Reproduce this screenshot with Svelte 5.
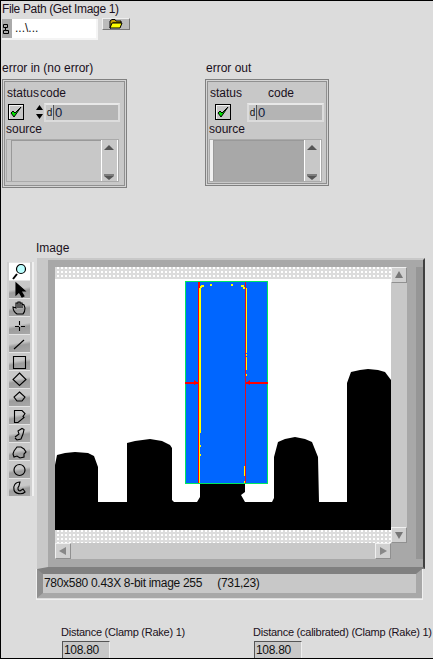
<script>
	const tools = [
		{ name: 'zoom', d: 'M6 11L2 16', circle: [10, 6, 4.5] },
		{ name: 'arrow', d: 'M5 2L5 14L8 11L11 16L13 15L10 10L14 10Z', fill: true },
		{ name: 'hand', d: 'M6 15C3 13 2 11 2 8L5 9L5 4L7 4L7 3L9 3L9 4L11 4L11 5L13 6L14 9C14 12 13 14 12 15ZM7 4V9M9 3V9M11 5V9' },
		{ name: 'cross', d: 'M8.500 4V8M8.500 10V14M4 9.500H8M10 9.500H14' },
		{ name: 'line', d: 'M3 14L13 5' },
		{ name: 'rect', d: 'M2.500 3.500H14.500V15.500H2.500Z' },
		{ name: 'diamond', d: 'M8.500 2L15 8.500L8.500 14.500L2 8.500Z' },
		{ name: 'rotated', d: 'M8.500 3L14 8L11 12H6L3 8Z' },
		{ name: 'poly', d: 'M3.500 3.500H11L14 6.500L12 9.500L13 10.500L7 15.500H3.500Z' },
		{ name: 'free', d: 'M4 12L8 9L7 6L11 3.500L13 4.500L12 9L10 14L6 15L4 13' },
		{ name: 'region', d: 'M3 8L6 4L10 4L13 6L15 9L13 11L13 14L9 15L6 13L3 14L2 11Z' },
		{ name: 'oval', circle: [8.5, 9, 5.5] },
		{ name: 'annulus', d: 'M9 3C4 3 2 7 3 11C4 15 11 16 14 13L12 10L9 12C7 12 6 9 8 7Z' }
	]
</script>

{#snippet arrowButton(dir)}
	<div class="scrollbtn">
		<svg width="14" height="14" viewBox="0 0 14 14">
			{#if dir === 'up'}<path d="M7 3L11 10H3Z" fill="#777" />{/if}
			{#if dir === 'down'}<path d="M7 11L11 4H3Z" fill="#777" />{/if}
			{#if dir === 'left'}<path d="M3 7L10 3V11Z" fill="#888" />{/if}
			{#if dir === 'right'}<path d="M11 7L4 3V11Z" fill="#888" />{/if}
		</svg>
	</div>
{/snippet}

{#snippet check()}
	<div class="check">
		<svg width="14" height="14" viewBox="0 0 14 14">
			<path d="M2 8L5 12L12 2L6 8L4 6Z" fill="#00e000" stroke="#000" stroke-width="1" />
		</svg>
	</div>
{/snippet}

{#snippet sourceBox(dark)}
	<div class="source" class:dark>
		<div class="source-text"></div>
		<div class="source-bar">
			<svg width="14" height="41" viewBox="0 0 14 41">
				<path d="M7 5L12 10H2Z" fill="#555" />
				<path d="M2 36H12L7 40Z" fill="#555" />
				<path d="M2 35H12" stroke="#333" />
			</svg>
		</div>
	</div>
{/snippet}

<div class="panel">
	<div class="label file-label">File Path (Get Image 1)</div>
	<div class="path">
		<div class="path-tag">
			<svg width="8" height="14" viewBox="0 0 8 14">
				<path d="M1.500 2.500H5.500V5.500H1.500ZM3.500 5.500V8.500H6.500V11.500H1.500V8.500H3.500" fill="none" stroke="#000" />
			</svg>
		</div>
		<div class="path-text">...\...</div>
	</div>
	<div class="browse">
		<svg width="14" height="10" viewBox="0 0 14 10">
			<path d="M1 2L3 0.500H6L7 2H12V4H4L2 9H1Z" fill="#c8a000" stroke="#000" />
			<path d="M3 4H13L11 9H1Z" fill="#ffff00" stroke="#000" />
		</svg>
	</div>

	<div class="label in-label">error in (no error)</div>
	<div class="cluster cluster-in">
		<div class="row-labels">
			<span class="label">status</span><span class="label code-in">code</span>
		</div>
		<div class="row-values">
			{@render check()}
			<div class="spin">
				<svg width="7" height="20" viewBox="0 0 7 20">
					<path d="M3.500 3L7 8H0Z" fill="#000" /><path d="M3.500 17L7 12H0Z" fill="#000" />
				</svg>
			</div>
			<div class="numeric">
				<span class="radix">d</span><span class="num">0</span>
			</div>
		</div>
		<div class="label source-label">source</div>
		{@render sourceBox(false)}
	</div>

	<div class="label out-label">error out</div>
	<div class="cluster cluster-out">
		<div class="row-labels">
			<span class="label">status</span><span class="label code-out">code</span>
		</div>
		<div class="row-values">
			{@render check()}
			<div class="numeric numeric-out">
				<span class="radix">d</span><span class="num">0</span>
			</div>
		</div>
		<div class="label source-label">source</div>
		{@render sourceBox(true)}
	</div>

	<div class="label image-label">Image</div>

	<div class="palette">
		{#each tools as tool, i}
			<div class="tool" class:active={i === 0}>
				<svg width="17" height="18" viewBox="0 0 17 18">
					{#if tool.circle}
						<circle cx={tool.circle[0]} cy={tool.circle[1]} r={tool.circle[2]} fill={i === 0 ? '#bff' : 'none'} stroke="#000" stroke-width="1.200" />
					{/if}
					{#if tool.d}
						<path d={tool.d} fill={tool.fill ? '#000' : 'none'} stroke="#000" stroke-width={i === 0 ? 2 : 1.1} />
					{/if}
				</svg>
			</div>
		{/each}
	</div>

	<div class="display">
		<div class="view">
			<div class="dots"></div>
			<div class="vbar">
				{@render arrowButton('up')}
				{@render arrowButton('down')}
			</div>
			<svg class="picture" width="336" height="251" viewBox="55 279 336 251">
				<rect x="55" y="279" width="336" height="251" fill="#fff" />
				<path fill="#000" d="M55 530V465L57 455L65 453L75 452L88 453L94 456L98 467V502H127V443L135 441L150 439L162 441L170 445L172 448V500L174 502H197L200 497V483H245V492L241 495L245 502H272L274 498V457L278 442L285 439L295 437L305 439L312 442L318 457L319 502H347V383L351 372L360 370L368 369L378 370L385 372L391 380V530Z" />
				<rect x="185.500" y="281.500" width="82" height="202" fill="#0066ff" stroke="#00e860" />
				<rect x="198" y="282" width="2" height="201" fill="#ff0000" />
				<rect x="245" y="282" width="1" height="201" fill="#e01020" />
				<rect x="185" y="382" width="13" height="2" fill="#ff0000" />
				<rect x="246" y="382" width="22" height="2" fill="#ff0000" />
				<path d="M194 380L198 383L194 385ZM250 380L246 383L250 385Z" fill="#ff0000" />
				<g fill="#ffff00">
					<rect x="199" y="288" width="2" height="145" />
					<rect x="199" y="433" width="1" height="50" />
					<rect x="200" y="445" width="1" height="2" />
					<rect x="200" y="454" width="1" height="2" />
					<rect x="200" y="286" width="2" height="2" />
					<rect x="201" y="285" width="3" height="2" />
					<rect x="210" y="284" width="2" height="2" />
					<rect x="231" y="284" width="2" height="2" />
					<rect x="241" y="285" width="3" height="2" />
					<rect x="243" y="287" width="2" height="2" />
					<rect x="246" y="288" width="1" height="65" />
					<rect x="246" y="354" width="1" height="2" />
					<rect x="246" y="357" width="1" height="13" />
					<rect x="246" y="374" width="1" height="2" />
					<rect x="244" y="466" width="1" height="10" />
					<rect x="244" y="481" width="1" height="2" />
				</g>
			</svg>
			<div class="dots"></div>
			<div class="hbar">
				{@render arrowButton('left')}
				{@render arrowButton('right')}
			</div>
			<div class="corner"></div>
		</div>
	</div>

	<div class="status">
		<div class="status-inner">780x580 0.43X 8-bit image 255 &nbsp;&nbsp;&nbsp; (731,23)</div>
	</div>

	<div class="label dist dist-a">Distance (Clamp (Rake) 1)</div>
	<div class="readout read-a">108.80</div>
	<div class="label dist dist-b">Distance (calibrated) (Clamp (Rake) 1)</div>
	<div class="readout read-b">108.80</div>
</div>

<style>
	:global(body) {
		margin: 0;
		overflow: hidden;
	}
	.panel {
		position: relative;
		width: 433px;
		height: 659px;
		box-sizing: border-box;
		background: #dcdcdc;
		border-top: 1px solid #000;
		border-left: 1px solid #000;
		border-bottom: 1px solid #000;
		overflow: hidden;
		font-family: 'Liberation Sans', Arial, sans-serif;
		font-size: 12px;
		color: #111;
	}
	.label {
		line-height: 14px;
		white-space: nowrap;
		color: #1a1020;
	}
	.panel > .label {
		position: absolute;
	}
	.file-label { left: 1px; top: 1px; letter-spacing: -0.35px; }
	.in-label { left: 1px; top: 60px; }
	.out-label { left: 205px; top: 60px; }
	.image-label { left: 35px; top: 240px; }
	.dist {
		font-size: 11px;
		letter-spacing: -0.25px;
	}
	.dist-a { left: 60px; top: 624px; }
	.dist-b { left: 252px; top: 624px; }

	.path {
		position: absolute;
		left: 1px;
		top: 18px;
		width: 96px;
		height: 21px;
		display: flex;
		box-sizing: border-box;
		border: 2px solid #f4f4f4;
		border-left: 0;
		border-top: 0;
	}
	.path-tag {
		width: 10px;
		background: #aaa;
		display: flex;
		align-items: center;
	}
	.path-text {
		flex: 1;
		background: #fff;
		padding-left: 3px;
		line-height: 19px;
	}
	.browse {
		position: absolute;
		left: 101px;
		top: 17px;
		width: 28px;
		height: 12px;
		background: #bbb;
		border: 1px solid #eee;
		border-right-color: #777;
		border-bottom-color: #777;
		box-sizing: border-box;
		display: flex;
		align-items: center;
		justify-content: center;
	}

	.cluster {
		position: absolute;
		top: 78px;
		box-sizing: border-box;
		background: #c8c8c8;
		box-shadow: inset 0 0 0 1px #808080, inset 0 0 0 2px #d4d4d4, inset 0 0 0 3px #909090;
		padding: 7px 4px 0 4px;
	}
	.cluster-in { left: 1px; width: 125px; height: 109px; }
	.cluster-out { left: 204px; width: 124px; height: 107px; }
	.row-labels {
		display: flex;
		padding-left: 1px;
	}
	.code-in {
		margin-left: 1px;
	}
	.code-out {
		margin-left: 26px;
	}
	.row-values {
		display: flex;
		align-items: center;
		margin-top: 2px;
		height: 20px;
		padding-left: 2px;
	}
	.cluster-out .row-values {
		padding-left: 6px;
	}
	.check {
		width: 16px;
		height: 16px;
		box-sizing: border-box;
		border: 1px solid #000;
		background: #c8c8c8;
		display: flex;
		align-items: center;
		justify-content: center;
		box-shadow: inset 1px 1px 0 #f4f4f4;
	}
	.spin {
		margin-left: 12px;
		width: 7px;
		height: 20px;
	}
	.numeric {
		margin-left: 1px;
		flex: none;
		width: 76px;
		height: 19px;
		box-sizing: border-box;
		border: 2px solid #dcdcdc;
		border-top-color: #e8e8e8;
		background: #b4b4b4;
		display: flex;
		line-height: 15px;
	}
	.numeric-out {
		margin-left: 16px;
		width: 77px;
	}
	.radix {
		width: 7px;
		font-size: 10px;
		background: #c8c8c8;
		text-align: center;
		border-right: 1px solid #555;
	}
	.num {
		padding-left: 1px;
		font-size: 13px;
		color: #102040;
	}
	.source {
		margin-top: 3px;
		width: 113px;
		height: 43px;
		box-sizing: border-box;
		border: 1px solid #aaa;
		background: #c8c8c8;
		display: flex;
		padding-left: 4px;
	}
	.source-text {
		flex: 1;
		border-left: 1px solid #999;
		border-top: 1px solid #999;
	}
	.source-bar {
		width: 15px;
		background: #c8c8c8;
		border-left: 1px solid #fff;
		border-right: 1px solid #fff;
	}
	.source.dark {
		background: #f0f0f0;
		padding-left: 3px;
	}
	.source.dark .source-text {
		background: #a8a8a8;
	}

	.palette {
		position: absolute;
		left: 6px;
		top: 261px;
		width: 25px;
		box-sizing: border-box;
		padding: 0 2px;
		display: flex;
		flex-direction: column;
		background: #d0d0d0;
		box-shadow: 2px 0 0 #f0f0f0;
	}
	.tool {
		height: 18px;
		box-sizing: border-box;
		display: flex;
		justify-content: center;
		border-top: 1px solid #e4e4e4;
		background: linear-gradient(170deg, #c8c8c8 45%, #9c9c9c 60%, #a8a8a8);
	}
	.tool.active {
		background: #fff;
	}

	.display {
		position: absolute;
		left: 36px;
		top: 257px;
		width: 388px;
		height: 311px;
		box-sizing: border-box;
		border-left: 11px solid #c8c8c8;
		border-top: 2px solid #c8c8c8;
		border-right: 2px solid #404040;
		border-bottom: 2px solid #808080;
		background: #a8a8a8;
		padding: 7px 14px 7px 7px;
	}
	.view {
		display: grid;
		grid-template-columns: 336px 16px;
		grid-template-rows: 12px 251px 13px 16px;
		box-shadow: 7px 0 0 #a8a8a8, 14px 0 0 #969696;
	}
	.dots {
		background: conic-gradient(#fff 25%, #dcdcdc 0) 0 0 / 4px 4px;
	}
	.vbar {
		grid-column: 2;
		grid-row: 1 / 4;
		background: #c8c8c8;
		display: flex;
		flex-direction: column;
		justify-content: space-between;
	}
	.hbar {
		grid-column: 1;
		background: #c8c8c8;
		display: flex;
		justify-content: space-between;
	}
	.corner {
		background: #a8a8a8;
	}
	.picture {
		display: block;
		grid-column: 1;
		grid-row: 2;
	}
	.scrollbtn {
		width: 16px;
		height: 16px;
		box-sizing: border-box;
		background: #d0d0d0;
		border: 1px solid #f0f0f0;
		border-right-color: #909090;
		border-bottom-color: #909090;
	}

	.status {
		position: absolute;
		left: 35px;
		top: 568px;
		width: 387px;
		height: 31px;
		box-sizing: border-box;
		border: 1px solid #f0f0f0;
		border-top: 0;
		padding-bottom: 1px;
	}
	.status-inner {
		height: 29px;
		box-sizing: border-box;
		background: #c8c8c8;
		border-style: solid;
		border-width: 5px 6px 5px 6px;
		border-color: #808080 #a8a8a8 #a8a8a8 #909090;
		line-height: 18px;
		padding-left: 1px;
		letter-spacing: -0.3px;
	}

	.readout {
		position: absolute;
		top: 640px;
		width: 48px;
		height: 18px;
		box-sizing: border-box;
		background: #c8c8c8;
		border: 1px solid #555;
		border-right-color: #eee;
		border-bottom: 0;
		line-height: 17px;
		padding-left: 1px;
		letter-spacing: -0.3px;
	}
	.read-a { left: 61px; }
	.read-b { left: 253px; }
</style>
